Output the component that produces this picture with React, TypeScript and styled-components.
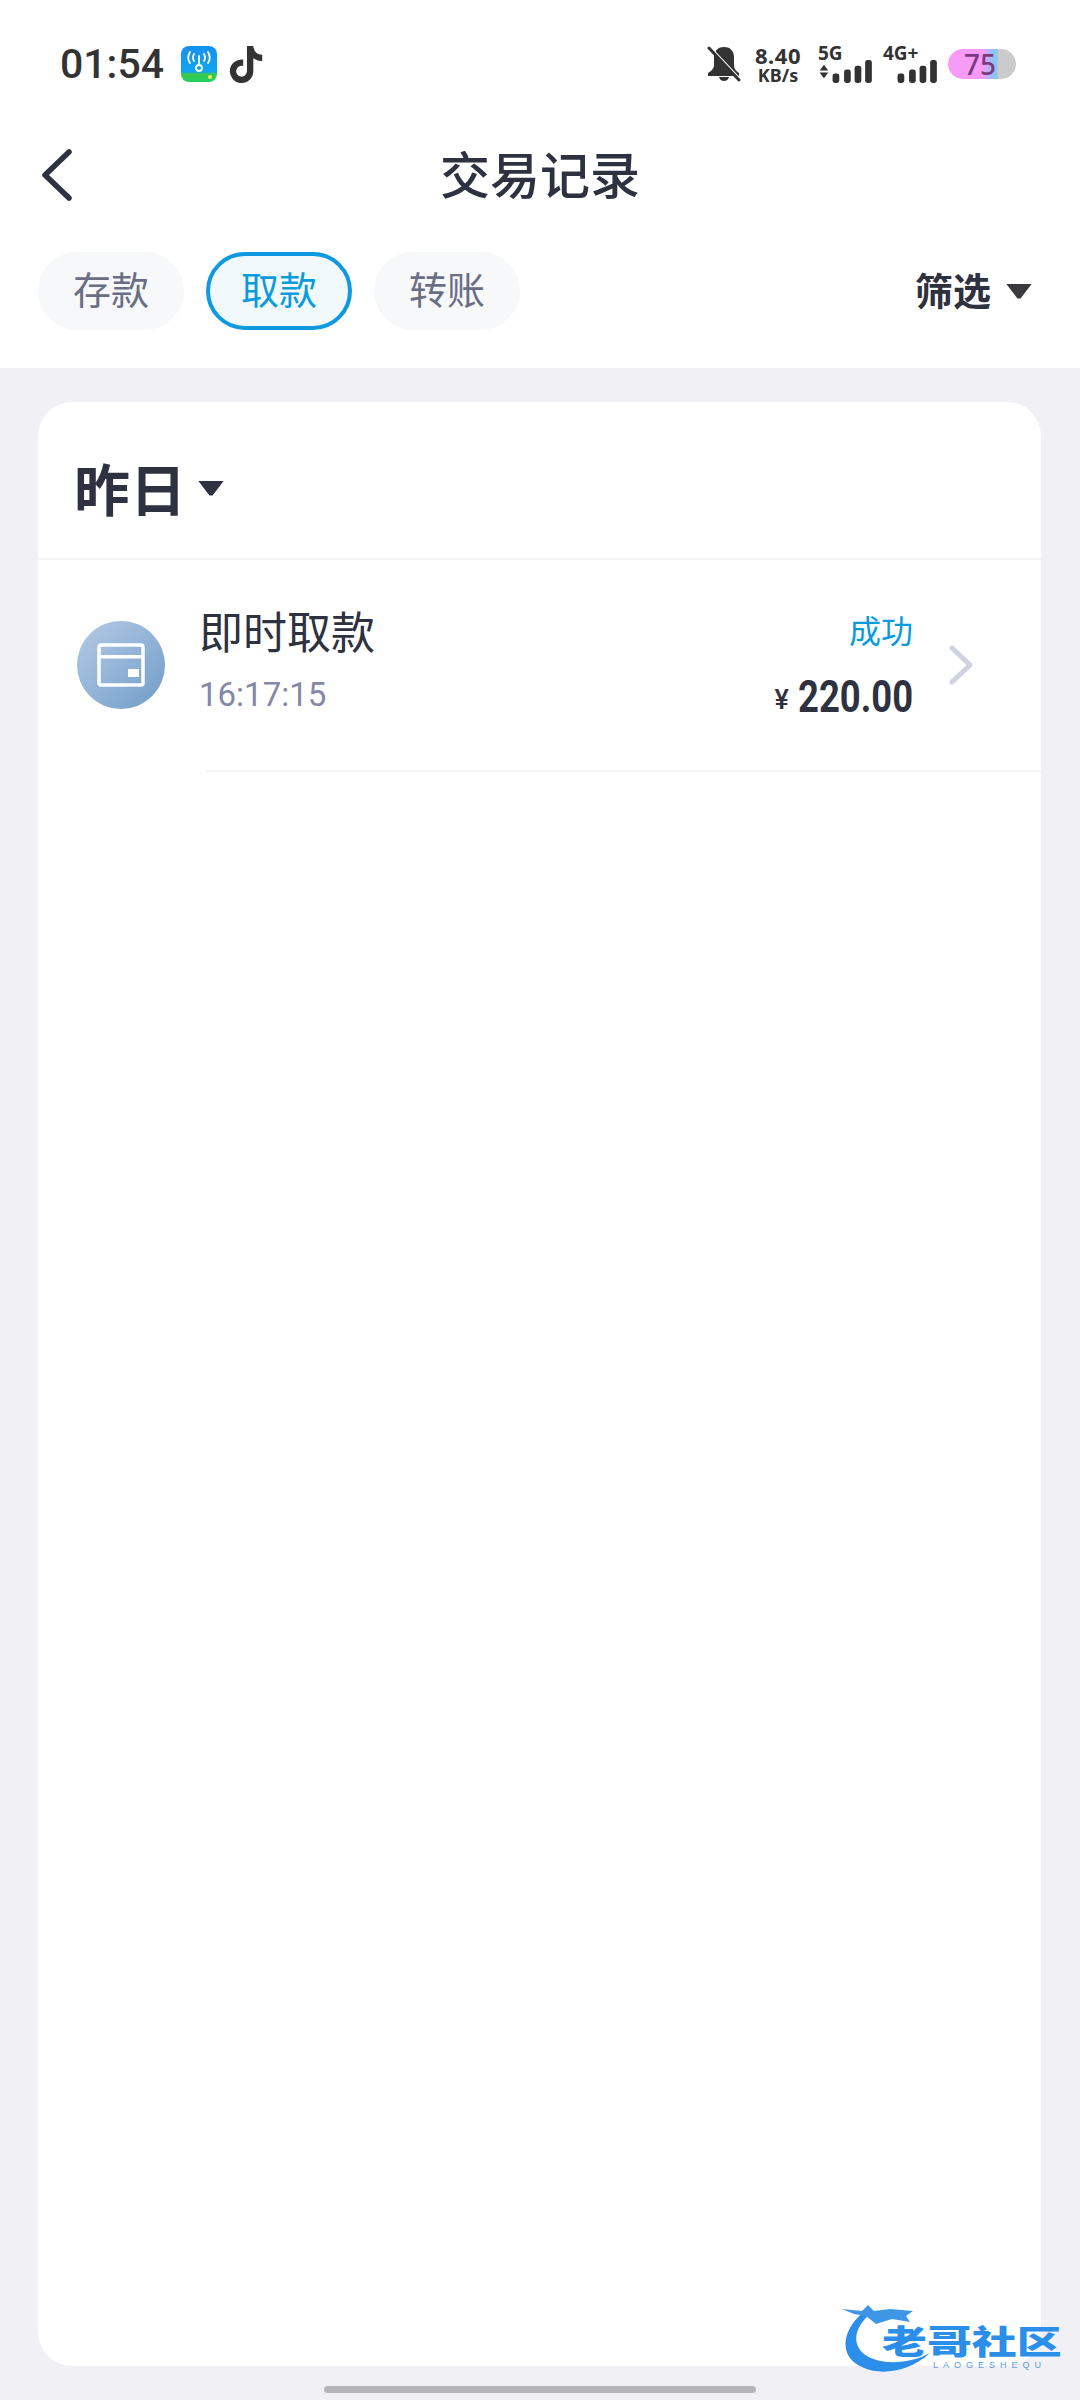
import styled, { createGlobalStyle } from 'styled-components'
import { FaTiktok } from 'react-icons/fa6'

const CJK = `'Noto Sans CJK SC', sans-serif`
const LATIN = `Roboto, 'Noto Sans CJK SC', sans-serif`

const GlobalStyle = createGlobalStyle`
  html, body {
    margin: 0;
    padding: 0;
    background: #f0f0f5;
  }
  * {
    box-sizing: border-box;
  }
`

const Page = styled.div`
  position: relative;
  width: 1080px;
  height: 2400px;
  display: flex;
  flex-direction: column;
  background: #f0f0f5;
  overflow: hidden;
  font-family: ${CJK};
  color: #2e3140;
`

const TopSection = styled.header`
  height: 368px;
  background: #fff;
`

/* status bar */
const StatusBar = styled.div`
  height: 128px;
  padding: 0 64px 0 60px;
  display: flex;
  align-items: center;
  color: #333;
`

const Clock = styled.span`
  font-family: ${LATIN};
  font-size: 41px;
  font-weight: 500;
  margin-right: 15px;
`

const TiktokMark = styled(FaTiktok)`
  width: 34px;
  height: 37px;
  margin-left: 9px;
  color: #333;
`

const StatusIcons = styled.div`
  margin-left: auto;
  display: flex;
  align-items: center;
`

const Speed = styled.div`
  width: 48px;
  margin: 0 16px 0 13px;
  display: flex;
  flex-direction: column;
  align-items: center;
  font-family: 'Noto Sans', sans-serif;
  font-weight: 700;
  line-height: 1;
  white-space: nowrap;

  > .value {
    font-size: 22px;
    line-height: 22px;
    letter-spacing: 0.5px;
  }

  > .unit {
    font-size: 18px;
    line-height: 18px;
  }
`

const Network = styled.div<{ $width: number }>`
  width: ${(p) => p.$width}px;
  height: 37px;
  margin-right: 10px;
  display: flex;
  flex-direction: column;
  justify-content: space-between;

  > .label {
    font-family: 'Noto Sans', sans-serif;
    font-size: 19px;
    font-weight: 700;
    line-height: 14px;
    white-space: nowrap;
  }
`

const Battery = styled.div`
  width: 68px;
  height: 30px;
  border-radius: 15px;
  display: flex;
  align-items: center;
  justify-content: center;
  padding-right: 4px;
  background: linear-gradient(90deg, #f79bf6 0, #f79bf6 52%, #8cc4f4 66%, #8cc4f4 72%, #cbcbcb 74%, #cbcbcb 100%);
  color: #7a3a80;
  font-family: 'Noto Sans', sans-serif;
  font-size: 28px;
  font-weight: 500;
  line-height: 30px;
`

/* nav */
const NavBar = styled.div`
  height: 94px;
  padding: 0 40px;
  display: grid;
  grid-template-columns: 1fr auto 1fr;
  align-items: center;
`

const Title = styled.h1`
  margin: 0 0 6px;
  font-size: 50px;
  font-weight: 500;
  line-height: 60px;
  color: #2e3140;
`

/* tabs */
const TabRow = styled.div`
  margin-top: 30px;
  padding: 0 48px 0 38px;
  display: flex;
  align-items: center;
  gap: 22px;
`

const Tab = styled.div<{ $active?: boolean }>`
  width: 146px;
  height: 78px;
  padding-bottom: 7px;
  border-radius: 39px;
  display: flex;
  align-items: center;
  justify-content: center;
  font-size: 38px;
  border: 4px solid ${(p) => (p.$active ? '#0f99e0' : '#f7f8fa')};
  background: ${(p) => (p.$active ? '#f2f9fd' : '#f7f8fa')};
  color: ${(p) => (p.$active ? '#0a9bdc' : '#6a6e85')};
`

const Filter = styled.div`
  margin-left: auto;
  display: flex;
  align-items: center;
  gap: 15px;
  font-size: 38px;
  font-weight: 700;
  color: #2e3140;

  > span {
    margin-bottom: 6px;
  }
`

const Caret = styled.i<{ $color?: string }>`
  display: block;
  width: 26px;
  height: 15px;
  background: ${(p) => p.$color ?? '#2e3140'};
  clip-path: polygon(0 0, 100% 0, 56% 100%, 44% 100%);
`

/* card */
const Card = styled.section`
  height: 1964px;
  margin: 34px 39px 0 38px;
  background: #fff;
  border-radius: 34px;
`

const CardHeader = styled.div`
  height: 158px;
  padding: 12px 0 0 36px;
  display: flex;
  align-items: center;
  gap: 12px;
  border-bottom: 2px solid #f5f5f8;
  font-size: 56px;
  font-weight: 700;
  color: #2e3140;

  > i {
    margin-top: 4px;
  }
`

const Row = styled.div`
  height: 210px;
  padding: 0 67px 0 39px;
  display: flex;
  align-items: center;
`

const RoundIcon = styled.div`
  width: 88px;
  height: 88px;
  margin-right: 34px;
  flex: none;
  border-radius: 50%;
  display: flex;
  align-items: center;
  justify-content: center;
  background: linear-gradient(135deg, #b4cae4 0%, #93b4d8 50%, #6f9cc4 100%);
`

const RowBody = styled.div`
  flex: 1;
  padding-bottom: 15px;
  display: flex;
  flex-direction: column;
  gap: 15px;
`

const RowTitle = styled.div`
  font-size: 44px;
  line-height: 60px;
  color: #2e3140;
`

const RowTime = styled.div`
  font-family: ${LATIN};
  font-size: 33px;
  line-height: 40px;
  color: #8488a8;
`

const RowAmount = styled.div`
  margin-right: 35px;
  padding-top: 4px;
  display: flex;
  flex-direction: column;
  align-items: flex-end;
  gap: 20px;
`

const Status = styled.div`
  font-size: 32px;
  line-height: 46px;
  color: #0a9bdc;
`

const Amount = styled.div`
  display: flex;
  align-items: baseline;
  font-family: ${LATIN};
  font-size: 45px;
  font-weight: 700;
  line-height: 50px;
  color: #2e3140;

  > .currency {
    position: relative;
    top: -3px;
    margin-right: 9px;
    font-size: 27px;
    font-weight: 500;
  }

  > .value {
    display: inline-block;
    margin-left: -27px;
    transform: scaleX(0.81);
    transform-origin: right center;
  }
`

const RowDivider = styled.div`
  height: 2px;
  margin-left: 168px;
  background: #f5f5f8;
`

/* bottom */
const HomeArea = styled.div`
  flex: 1;
  padding-top: 20px;
  display: flex;
  justify-content: center;
`

const HomeBar = styled.div`
  width: 432px;
  height: 7px;
  border-radius: 4px;
  background: #b4b4b6;
`

const Watermark = styled.div`
  position: absolute;
  left: 840px;
  top: 2300px;
  width: 240px;
  height: 90px;
  color: #2b8fe9;

  > svg {
    position: absolute;
    left: 0;
    top: 0;
  }

  > .name {
    position: absolute;
    left: 42px;
    top: 23px;
    font-size: 33px;
    font-weight: 900;
    line-height: 34px;
    white-space: nowrap;
    transform: scaleX(1.36);
    transform-origin: left center;
  }

  > .latin {
    position: absolute;
    left: 93px;
    top: 60px;
    font-family: 'Liberation Sans', sans-serif;
    font-size: 9px;
    line-height: 10px;
    letter-spacing: 5px;
    color: #5a9fe0;
    white-space: nowrap;
  }
`

const WifiKeyIcon = () => (
  <svg width="41" height="37" viewBox="0 0 41 37">
    <defs>
      <linearGradient id="wk" x1="0" y1="0" x2="0" y2="1">
        <stop offset="0" stopColor="#1690f0" />
        <stop offset="0.72" stopColor="#0fa6f0" />
        <stop offset="0.78" stopColor="#3cc84a" />
        <stop offset="1" stopColor="#22d060" />
      </linearGradient>
    </defs>
    <rect x="2" y="0" width="36" height="36" rx="8" fill="url(#wk)" />
    <g fill="none" stroke="#fff" strokeWidth="1.8" strokeLinecap="round">
      <path d="M11 6 Q7.500 12 11 17" />
      <path d="M15 8 Q13 12 15 15" />
      <path d="M29 6 Q32.500 12 29 17" />
      <path d="M25 8 Q27 12 25 15" />
      <path d="M20 10 V19" />
      <circle cx="20" cy="22" r="3" />
    </g>
    <circle cx="31" cy="31" r="2" fill="#e8e860" />
  </svg>
)

const BellOffIcon = () => (
  <svg width="34" height="36" viewBox="0 0 34 36">
    <path d="M17 1 C10 1 7 6 7 11 V19 C7 23 4 25 1 27 V30 H32 V27 C29 25 27 23 27 19 V11 C27 6 24 1 17 1 Z" fill="#333" />
    <path d="M12 31 H22 C21 34 19 35 17 35 C15 35 13 34 12 31 Z" fill="#333" />
    <path d="M3 1 L33 33" stroke="#fff" strokeWidth="2" />
    <path d="M2 2 L32 34" stroke="#333" strokeWidth="3" strokeLinecap="round" />
  </svg>
)

const SignalBars = ({ arrows }: { arrows?: boolean }) => (
  <svg width="55" height="24" viewBox="0 0 55 24">
    {arrows && <path d="M5 5 L9.500 11 H0.500 Z M0.500 13 H9.500 L5 19 Z" fill="#333" />}
    <rect x="14" y="14" width="7" height="10" rx="2.500" fill="#333" />
    <rect x="26" y="10" width="7" height="14" rx="2.500" fill="#333" />
    <rect x="37" y="6" width="7" height="18" rx="2.500" fill="#333" />
    <rect x="48" y="0" width="7" height="24" rx="2.500" fill="#333" />
  </svg>
)

const BackIcon = () => (
  <svg width="33" height="52" viewBox="0 0 33 52" fill="none">
    <path d="M29 3 L5 26 L29 49" stroke="#2e3140" strokeWidth="5.500" strokeLinecap="round" strokeLinejoin="round" />
  </svg>
)

const CardIcon = () => (
  <svg width="48" height="44" viewBox="0 0 48 44" fill="none">
    <rect x="2" y="2" width="44" height="40" rx="2" stroke="#fff" strokeWidth="3.500" />
    <rect x="2" y="12" width="44" height="3.500" fill="#fff" />
    <rect x="31" y="26" width="11" height="8" fill="#fff" />
  </svg>
)

const ChevronIcon = () => (
  <svg width="26" height="42" viewBox="0 0 26 42" fill="none">
    <path d="M4 4 L22 21 L4 38" stroke="#d0d2e0" strokeWidth="5" strokeLinecap="round" strokeLinejoin="round" />
  </svg>
)

const DragonMark = () => (
  <svg width="100" height="80" viewBox="0 0 100 80">
    <path d="M24 12 C8 24 0 44 10 58 C22 74 60 80 90 53 C70 64 40 66 24 54 C12 44 14 28 30 14 Z" fill="#2b8fe9" />
    <path d="M2 9 L22 11 L28 5 L34 11 L50 9 L73 11 L66 16 L70 22 L52 19 L36 24 L26 16 L14 14 Z" fill="#3d97e6" />
  </svg>
)

export default function App() {
  return (
    <Page>
      <GlobalStyle />
      <TopSection>
        <StatusBar>
          <Clock>01:54</Clock>
          <WifiKeyIcon />
          <TiktokMark />
          <StatusIcons>
            <BellOffIcon />
            <Speed>
              <span className="value">8.40</span>
              <span className="unit">KB/s</span>
            </Speed>
            <Network $width={55}>
              <span className="label">5G</span>
              <SignalBars arrows />
            </Network>
            <Network $width={55}>
              <span className="label">4G+</span>
              <SignalBars />
            </Network>
            <Battery>75</Battery>
          </StatusIcons>
        </StatusBar>
        <NavBar>
          <BackIcon />
          <Title>交易记录</Title>
        </NavBar>
        <TabRow>
          <Tab>存款</Tab>
          <Tab $active>取款</Tab>
          <Tab>转账</Tab>
          <Filter>
            <span>筛选</span>
            <Caret $color="#3a3a3e" />
          </Filter>
        </TabRow>
      </TopSection>

      <Card>
        <CardHeader>
          昨日
          <Caret />
        </CardHeader>
        <Row>
          <RoundIcon>
            <CardIcon />
          </RoundIcon>
          <RowBody>
            <RowTitle>即时取款</RowTitle>
            <RowTime>16:17:15</RowTime>
          </RowBody>
          <RowAmount>
            <Status>成功</Status>
            <Amount>
              <span className="currency">¥</span>
              <span className="value">220.00</span>
            </Amount>
          </RowAmount>
          <ChevronIcon />
        </Row>
        <RowDivider />
      </Card>

      <HomeArea>
        <HomeBar />
      </HomeArea>

      <Watermark>
        <DragonMark />
        <span className="name">老哥社区</span>
        <span className="latin">LAOGESHEQU</span>
      </Watermark>
    </Page>
  )
}
